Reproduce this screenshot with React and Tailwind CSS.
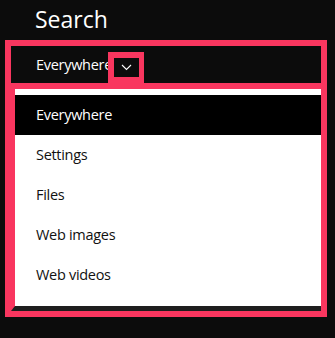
export default function App() {
  const items = ["Everywhere", "Settings", "Files", "Web images", "Web videos"];

  return (
    <div
      className="w-[335px] h-[338px] bg-[#0c0c0c] overflow-hidden"
      style={{ fontFamily: '"Open Sans", "Noto Sans", sans-serif' }}
    >
      {/* Title */}
      <div className="h-[40px] pl-[35px] pt-[4px] text-[23px] leading-[30px] text-white">
        Search
      </div>

      {/* Highlighted frame */}
      <div className="ml-[5px] w-[322px] h-[277px] border-[6px] border-[#f9365f] flex flex-col">
        {/* Scope selector */}
        <div className="h-[37px] flex items-end pl-[25px]">
          <span className="self-center w-[72px] text-[14.5px] leading-[20px] text-white tracking-[-0.3px] whitespace-nowrap">
            Everywhere
          </span>
          <div className="w-[36px] h-[31px] bg-[#f9365f] p-[6px]">
            <div className="w-[25px] h-[19px] bg-[#0c0c0c] flex items-center justify-center">
              <svg width="11" height="7" viewBox="0 0 11 7" fill="none">
                <polyline points="1,1 5.5,5.5 10,1" stroke="#ffffff" strokeWidth="1.1" />
              </svg>
            </div>
          </div>
        </div>

        {/* Dropdown list */}
        <div className="flex-1 border-t-[6px] border-l-[4px] border-b-[5px] border-t-[#f9365f] border-l-[#f9365f] border-b-[#1e1e1e] bg-white pt-[6px]">
          {items.map((item, i) => (
            <div
              key={item}
              className={`h-[40px] flex items-center pl-[21px] text-[14.5px] tracking-[-0.3px] ${
                i === 0 ? "bg-black text-white" : "text-[#111111]"
              }`}
            >
              {item}
            </div>
          ))}
        </div>
      </div>
    </div>
  );
}
